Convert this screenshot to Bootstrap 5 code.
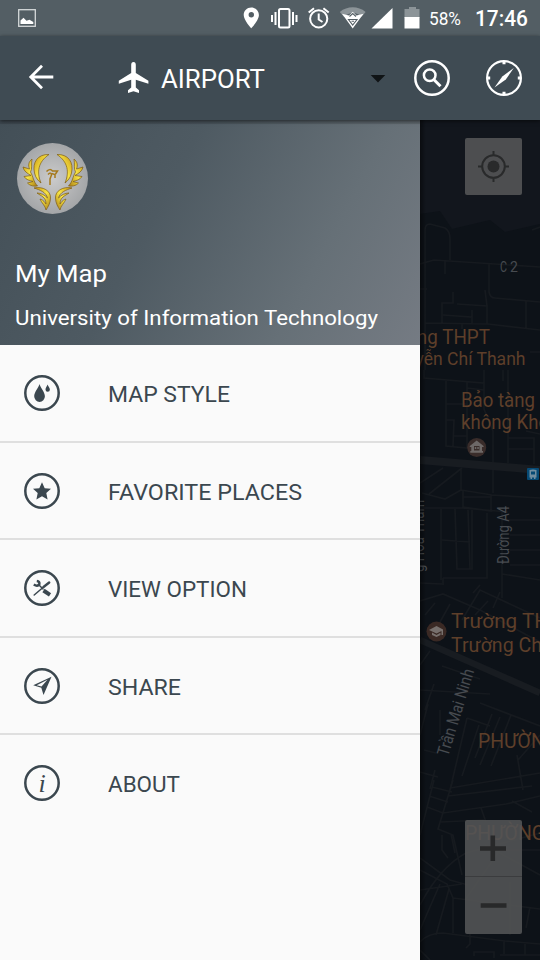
<!DOCTYPE html>
<html lang="en">
<head>
<meta charset="utf-8">
<meta name="viewport" content="width=device-width, initial-scale=1">
<title>My Map</title>
<link href="https://cdn.jsdelivr.net/npm/bootstrap@5.3.0/dist/css/bootstrap.min.css" rel="stylesheet">
<style>
body{font-family:Roboto,"Liberation Sans",sans-serif;background:#0d131a;overflow:hidden}
svg{display:block;flex:none}
.screen{width:540px;height:960px}
.statusbar{height:36px;background:#535e64}
.appbar{height:84px;background:#3f4b53;box-shadow:0 1px 4px rgba(0,0,0,.6);z-index:2}
.compass{margin-right:18px}
.drawer{width:420px;background:#fafafa}
.drawer-head{height:225px;background:linear-gradient(118deg,#434f57 0%,#4e5a62 38%,#667077 73%,#757b83 100%)}
.menu-row{height:97.6px;padding:1px 24px 0;border-bottom:2px solid #dfdfdf;color:#3b474f;gap:48px}
.menu-row:last-child{border-bottom:0;padding-bottom:3px}
.ico{width:36px;height:36px}
</style>
<script src="https://cdn.jsdelivr.net/npm/bootstrap@5.3.0/dist/js/bootstrap.bundle.min.js"></script>
</head>
<body>
<div class="screen d-flex flex-column overflow-hidden">
  <header class="statusbar">
    <svg width="540" height="36" fill="#fff">
      <rect x="18.700" y="9.700" width="16.600" height="16.600" fill="none" stroke="#d5d9da" stroke-width="1.300"/>
      <path d="M20.500 24V20.500L23.500 17.800L26.500 20.800L29.500 19.800L33.300 22V24Z"/>
      <path fill-rule="evenodd" d="M251.300 7.500c-4.300 0-7.600 3.300-7.600 7.400 0 5.200 7.600 13.400 7.600 13.400s7.600-8.200 7.600-13.400c0-4.100-3.300-7.400-7.600-7.400Zm0 4.600a2.700 2.700 0 1 1 0 5.400 2.700 2.700 0 0 1 0-5.400Z"/>
      <g fill="none" stroke="#fff" stroke-width="2"><rect x="279" y="9" width="10.500" height="18.500" rx="1.500"/><path d="M275.500 12V25M272 15V22M293 12V25M296.500 15V22"/></g>
      <g fill="none" stroke="#fff" stroke-width="2"><circle cx="318.700" cy="18.800" r="8.600"/><path d="M318.700 13.500V19.500L322.500 22M308.700 12.500L314 8.200M328.700 12.500L323.400 8.200"/></g>
      <path fill="#8c9498" d="M339.800 12C347.500 5.800 358 5.800 365.600 12L361.500 17C357 11.500 349 11.500 344 17Z"/>
      <path d="M342 13.800L349 15.500L352.700 11.800L356.500 15.500L363.500 13.800L352.700 28.500Z"/>
      <path fill="none" stroke="#535e64" stroke-width="1.100" d="M349.500 16.500L352.700 13.500L356 16.500M348.500 19.500H357L352.700 25ZM351.500 21.200H354"/>
      <path d="M392.500 8V28.500H371.500Z"/>
      <path fill="#8c9498" d="M409 7h7v2h3.500v9h-15V9h4.500Z"/><path d="M404.500 17h15v11.500h-15Z"/>
      <text x="429" y="25" font-size="18" textLength="32" lengthAdjust="spacingAndGlyphs">58%</text>
      <text x="475" y="26.300" font-size="22" font-weight="500" textLength="53" lengthAdjust="spacingAndGlyphs">17:46</text>
    </svg>
  </header>

  <nav class="appbar d-flex align-items-center position-relative text-white">
    <svg class="ico ms-4" viewBox="24 60 36 36" fill="none" stroke="#fff" stroke-width="2.800"><path d="M53.300 77H31M42 65.800L30.800 77L42 88.200"/></svg>
    <svg width="94" height="36" viewBox="60 60 94 36" fill="#fff"><path d="M133.500 62C131.900 62 131.200 63.300 131.200 64.800V73L118.800 80.700V83.700L131.200 79.800V87.600L128 90.200V93L133.500 91.300L139 93V90.200L135.800 87.600V79.800L148.400 83.700V80.700L135.800 73V64.800C135.800 63.300 135.100 62 133.500 62Z"/></svg>
    <svg width="260" height="40" viewBox="154 58 260 40" fill="#fff"><text x="161" y="88" font-size="25" textLength="104" lengthAdjust="spacingAndGlyphs">AIRPORT</text><path fill="#101416" d="M370.700 75H385.300L378 82.500Z"/></svg>
    <svg class="ico" viewBox="414 60 36 36" fill="none" stroke="#fff" stroke-width="2.500"><circle cx="432" cy="78" r="16.700"/><circle cx="429.700" cy="75.200" r="5.800"/><path stroke-width="3" d="M434 79.800L440.500 86.300"/></svg>
    <svg class="ico compass ms-auto" viewBox="486 60 36 36" fill="none" stroke="#fff" stroke-width="2.200"><circle cx="504" cy="78" r="16.900"/><path stroke-width="3" d="M504 61V64.200M504 91.800V95M487 78H490.200M517.800 78H521"/><path fill="#fff" stroke="none" d="M513.800 68L505.800 79.500L494.500 87.500L502.300 76.500Z"/></svg>
  </nav>

  <main class="d-flex flex-grow-1">
    <aside class="drawer">
      <div class="drawer-head">
        <svg width="420" height="225" viewBox="0 120 420 225" fill="#fff">
          <defs>
            <radialGradient id="disc"><stop offset="0" stop-color="#cbcbcb"/><stop offset="1" stop-color="#a4a6a8"/></radialGradient>
            <linearGradient id="gold" x2="1" y2="1"><stop offset="0" stop-color="#c99512"/><stop offset=".5" stop-color="#f7e545"/><stop offset="1" stop-color="#a87a12"/></linearGradient>
            <g id="wing" fill="url(#gold)" stroke="#7d5c16" stroke-width=".7">
              <path d="M49 154.500C38 154 32 162 34.500 173C35.500 178 38.500 181 41 183C36.500 172 38 162 49 154.500Z"/>
              <path d="M32 159C28.500 162 28 165 29.500 169L23 167C24 171.500 27 173 31 175.500L24 176.500C26 180 30 180.500 33 181.500L27.500 183C30 186 34.500 186.500 37.500 186C33 181 33.500 177 30.500 172C32.500 169 31 164 32 159Z"/>
              <path d="M34 188C43 186 51 191 50.500 198C50.500 203 48 207 46 210C45.500 206 41.500 203 40 199C43.500 200 45 202.500 46 204C46 197 41 196 37 193C41 193 45 195 47.500 198C46 192 40 190 34 188Z"/>
            </g>
          </defs>
          <rect width="420" height="4" y="120" fill="#000" opacity=".1"/>
          <circle cx="52.500" cy="178.500" r="35.500" fill="url(#disc)"/>
          <use href="#wing"/><use href="#wing" transform="matrix(-1 0 0 1 106 0)"/>
          <path fill="none" stroke="#a5791c" stroke-width="1.500" d="M46.500 171.500Q50 168 52.500 171H57.500L55.500 174M48 174.500Q51 171.500 51.500 175L50 179V185M51.500 173.500L55 174.500V178"/>
          <text x="15" y="282" font-size="24" textLength="92" lengthAdjust="spacingAndGlyphs">My Map</text>
          <text x="15" y="325" font-size="21" textLength="363" lengthAdjust="spacingAndGlyphs">University of Information Technology</text>
        </svg>
      </div>
      <div class="menu">
        <div class="menu-row d-flex align-items-center">
          <svg class="ico" viewBox="0 0 36 36"><circle cx="18" cy="18" r="16.700" fill="none" stroke="currentColor" stroke-width="2.500"/><path fill="currentColor" d="M15.500 9C14.500 13 10.200 17 10.200 21.300a5.300 5.700 0 0 0 10.700 0C20.900 17 16.500 13 15.500 9ZM23.600 9.500C23 11.500 21.500 12.700 21.500 14.500a2.200 2.200 0 0 0 4.400 0C25.900 12.700 24 11.500 23.600 9.500Z"/></svg>
          <svg width="200" height="30" fill="currentColor"><text x="0" y="24" font-size="22.500" textLength="122" lengthAdjust="spacingAndGlyphs">MAP STYLE</text></svg>
        </div>
        <div class="menu-row d-flex align-items-center">
          <svg class="ico" viewBox="0 0 36 36"><circle cx="18" cy="18" r="16.700" fill="none" stroke="currentColor" stroke-width="2.500"/><path fill="currentColor" d="M18 9.300L20.700 15.200L27 15.800L22.300 20L23.600 26.500L18 23.300L12.400 26.500L13.700 20L9 15.800L15.300 15.200Z"/></svg>
          <svg width="200" height="30" fill="currentColor"><text x="0" y="24" font-size="22.500" textLength="194" lengthAdjust="spacingAndGlyphs">FAVORITE PLACES</text></svg>
        </div>
        <div class="menu-row d-flex align-items-center">
          <svg class="ico" viewBox="0 0 36 36" fill="none" stroke="currentColor"><circle cx="18" cy="18" r="16.700" stroke-width="2.500"/><path stroke-width="2.500" d="M12.800 11Q16 11.500 15.300 14.300Q13.500 17 9.800 14.500"/><path stroke-width="1.500" stroke-linecap="round" d="M10.200 25L19 17.500M15 15L19 19"/><path stroke-width="2.400" stroke-linecap="round" d="M19.500 17L25.200 12.500"/><path stroke-width="4" d="M19.500 20.500L26 24.800"/></svg>
          <svg width="200" height="30" fill="currentColor"><text x="0" y="24" font-size="22.500" textLength="139" lengthAdjust="spacingAndGlyphs">VIEW OPTION</text></svg>
        </div>
        <div class="menu-row d-flex align-items-center">
          <svg class="ico" viewBox="0 0 36 36"><circle cx="18" cy="18" r="16.700" fill="none" stroke="currentColor" stroke-width="2.500"/><path fill="currentColor" fill-rule="evenodd" d="M27.500 8.700L19.500 27L17.300 19.800L9.200 17.300ZM23.500 11.800L12.700 17.200L17.500 18.400Z"/></svg>
          <svg width="200" height="30" fill="currentColor"><text x="0" y="24" font-size="22.500" textLength="73" lengthAdjust="spacingAndGlyphs">SHARE</text></svg>
        </div>
        <div class="menu-row d-flex align-items-center">
          <svg class="ico" viewBox="0 0 36 36"><circle cx="18" cy="18" r="16.700" fill="none" stroke="currentColor" stroke-width="2.500"/><text x="14.500" y="26.500" font-family="Liberation Serif, serif" font-style="italic" font-size="26" fill="currentColor">i</text></svg>
          <svg width="200" height="30" fill="currentColor"><text x="0" y="24" font-size="22.500" textLength="72" lengthAdjust="spacingAndGlyphs">ABOUT</text></svg>
        </div>
      </div>
    </aside>

    <svg width="120" height="840" viewBox="420 120 120 840">
      <rect x="420" y="120" width="120" height="840" fill="#0d1218"/>
      <path fill="#12161d" d="M420 120H540V224L505 232L490 220L452 229L440 211L420 214Z"/>
      <g fill="none" stroke="#161a1f" stroke-width="1.700">
        <path d="M425 370V230Q425 224 430 224L445 228Q450 231 450 239V260M420 264L434 260L540 267M445 261V274M489 264V292Q490 298 495 298L540 302M526 301V328M425 323L488 324L540 330M442 323V303H453V292M457 304L487 306V324M485 290L487 306M443 315L472 317V310M472 317V324M532 230L540 227M420 289H427M462 324V329M530 352H540"/>
        <path d="M424 370V378L484 383V370M446 381V446L467 448V382M446 404H467M446 420H454L453 446M454 436H467M467 388L484 390M484 383V409L493 431V493M503 370V381M508 370V463M508 438H534V464M508 449H534M526 431L540 434M420 483L443 468M429 494L462 468M461 469V490L445 499L422 493M461 490L492 495M463 490V507L491 511V495M463 497H491M491 495L540 498M420 508L462 508L508 512M441 509V580M455 509L457 569H472V509M468 510L470 569M442 540L470 542M487 513V578L443 578M443 578V585M420 583L442 584M502 512V598M502 520H540M510 535H540M510 550H540M510 565H540M502 574L540 580M473 593L480 585"/>
        <path d="M420 601L443 594L480 610L540 642M425 615L435 603M440 622L450 604M462 620L480 590L540 618M493 608L500 592M475 615L488 601M420 665L430 651M442 666L480 679M425 710L434 684M420 690L490 694M480 703L540 726M428 704L420 735M440 710V735M500 717L480 765M492 714L475 758M479 725L462 776M467 718L490 726M467 718L450 790M511 715L491 766M424 750L436 753M420 772L438 777M430 789L435 770M518 760L540 735M517 755L523 790M450 788L540 773"/>
        <path d="M453 780L438 829L453 835L462 875M434 780L420 835M432 787L452 792M429 796L448 802M427 807L443 813M448 796L532 786M443 813L506 804L540 796M441 822L484 820M481 808L486 822M512 801L532 812M420 858L450 880L468 885M451 834L455 853M442 835V850L448 858M420 905Q440 867 466 853L540 833M420 870L447 884L453 898V933M420 890L462 884M440 884L420 930M449 889L436 935M453 898L540 909M465 900L500 850L540 850M530 907L526 928M420 942Q428 933 443 933L505 941L540 944M470 934V944L466 948M504 941V954M474 956V952H494V958M500 955H540M525 944V955M420 950L430 960M510 882V935M485 845L540 875"/>
      </g>
      <path fill="none" stroke="#181c21" stroke-width="8" d="M420 460L540 470"/>
      <path fill="none" stroke="#181c21" stroke-width="6.500" d="M420 640L540 693"/>
      <g fill="#5e3f2a" font-size="20">
        <text x="490" y="344" text-anchor="end" textLength="102" lengthAdjust="spacingAndGlyphs">rường THPT</text>
        <text x="525.500" y="365" font-size="19" text-anchor="end" textLength="142" lengthAdjust="spacingAndGlyphs">Nguyễn Chí Thanh</text>
        <text x="461" y="407" textLength="74" lengthAdjust="spacingAndGlyphs">Bảo tàng</text>
        <text x="461" y="429" textLength="88" lengthAdjust="spacingAndGlyphs">không Khô</text>
        <text x="451" y="628" font-size="21" textLength="98" lengthAdjust="spacingAndGlyphs">Trường TH</text>
        <text x="451" y="652" font-size="21" textLength="91" lengthAdjust="spacingAndGlyphs">Trường Ch</text>
        <text x="478" y="748" textLength="80" lengthAdjust="spacingAndGlyphs">PHƯỜNG</text>
        <text x="465" y="840" textLength="80" lengthAdjust="spacingAndGlyphs">PHƯỜNG</text>
      </g>
      <g fill="#474b50" font-size="16">
        <text x="500" y="271.500" font-size="14" textLength="7" lengthAdjust="spacingAndGlyphs">C</text><text x="510" y="272" font-size="14" textLength="7">2</text>
        <text transform="translate(509 564) rotate(-90)" textLength="58" lengthAdjust="spacingAndGlyphs">Đường A4</text>
        <text transform="translate(448 757) rotate(-73)" font-size="17" textLength="90" lengthAdjust="spacingAndGlyphs">Trần Mai Ninh</text>
        <text transform="translate(423.500 572) rotate(-90)" textLength="72" lengthAdjust="spacingAndGlyphs">g Hoa Thám</text>
      </g>
      <circle cx="476.700" cy="447.500" r="9.500" fill="#392c2a"/>
      <path fill="#6d6867" fill-rule="evenodd" d="M469.800 446L476.700 440.500L483.600 446V447H482V451H483V452.700H470.300V451H471.300V447H469.800ZM474 446V450.500H479.500V446Z"/><path fill="#6d6867" d="M474.800 447h1.500v2h-1.500zM477.300 447h1.500v2h-1.500z"/>
      <circle cx="436.500" cy="631.500" r="10" fill="#3a2924"/>
      <path fill="#77706d" d="M429 630L436.500 626L443 629.500V635H441.500V631L436.500 633.500ZM432 632.500L436.500 635L440.500 632.700V635L436.500 637L432 635Z"/>
      <rect x="527" y="468" width="12" height="12" rx="1" fill="#064a75"/><path fill="#718ea0" fill-rule="evenodd" d="M529.500 470Q533 469 536.500 470V477.500H535.500V479H534V477.500H532V479H530.500V477.500H529.500ZM531 471.500V474.500H535V471.500Z"/>
      <rect x="465" y="138" width="57" height="57" rx="2" fill="#4d4e50"/>
      <g fill="none" stroke="#292a2b" stroke-width="2"><circle cx="493.500" cy="166.500" r="11.300"/><path d="M493.500 151V156M493.500 177V182M478 166.500H483M504 166.500H509"/></g><circle cx="493.500" cy="166.500" r="6" fill="#292a2b"/>
      <rect x="465" y="820" width="57" height="114" rx="2" fill="#545556" fill-opacity=".88"/>
      <path fill="none" stroke="#3b3c3e" d="M465 876.500H522"/>
      <path fill="none" stroke="#28292a" stroke-width="4.600" d="M480 848.500H506M492.800 835.500V861M480.700 905.500H506.500"/>
      <linearGradient id="edge"><stop stop-color="#000" stop-opacity=".45"/><stop offset="1" stop-color="#000" stop-opacity="0"/></linearGradient>
      <rect x="420" y="120" width="6" height="840" fill="url(#edge)"/>
    </svg>
  </main>
</div>
</body>
</html>
